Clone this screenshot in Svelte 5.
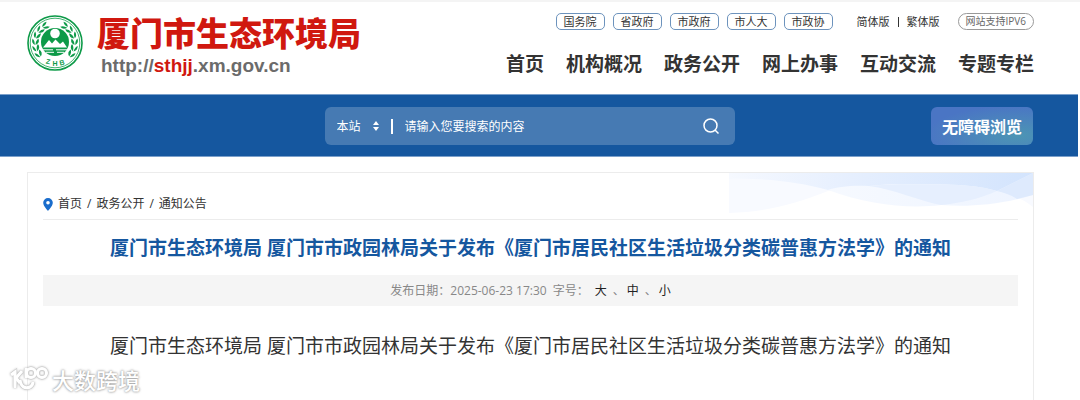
<script>
  const govLinks = ['国务院', '省政府', '市政府', '市人大', '市政协'];
  const navItems = ['首页', '机构概况', '政务公开', '网上办事', '互动交流', '专题专栏'];
  const crumbs = ['首页', '政务公开', '通知公告'];
  const title = '厦门市生态环境局 厦门市市政园林局关于发布《厦门市居民社区生活垃圾分类碳普惠方法学》的通知';

  // leaves of the laurel, as angles from the bottom of the emblem
  const leaves = [52, 71, 90, 109, 128, 147];

  let scope = $state('本站');
  let keyword = $state('');
</script>

<svelte:head>
  <title>厦门市生态环境局</title>
</svelte:head>

<div class="page">
  <header class="header">
    <a class="brand" href="#home">
      <svg class="emblem" viewBox="0 0 56 56" aria-hidden="true">
        <circle cx="28" cy="28" r="27" fill="#fff" stroke="#0d9a48" stroke-width="1.6" />
        <circle cx="28" cy="28" r="24.8" fill="none" stroke="#0d9a48" stroke-width="0.8" />
        {#each [1, -1] as side}
          <g transform="translate(28 28) scale({side} 1)" fill="#0d9a48">
            {#each leaves as angle}
              <g transform="rotate({-angle}) translate(0 19.5)">
                <path d="M-2 0Q0 -4.500 4.500 -3Q2.500 0 -2 0Z" />
                <path d="M-2 0.800Q0 4.300 4.500 3Q2.500 0.500 -2 0.800Z" />
              </g>
            {/each}
          </g>
        {/each}
        <circle cx="28" cy="27" r="15" fill="#fff" />
        <circle cx="28" cy="27" r="14" fill="#0d9a48" />
        <circle cx="28" cy="18.5" r="4.8" fill="#fff" />
        <path d="M16 32.500L22 25L25 28.500L28.500 24.500L33 29L36 26.500L40 32.500Z" fill="#fff" />
        <path d="M16 34.800H26M29 34.800H40M19 37.300H27M30 37.300H37" stroke="#fff" stroke-width="1" />
        <g class="emblem-text">
          <text transform="translate(18.5 48.5) rotate(12)">Z</text>
          <text x="25.5" y="51">H</text>
          <text transform="translate(33 50.5) rotate(-12)">B</text>
        </g>
      </svg>
      <span class="brand-words">
        <span class="brand-name">厦门市生态环境局</span>
        <span class="brand-url">http://<b>sthjj</b>.xm.gov.cn</span>
      </span>
    </a>

    <div class="header-right">
      <div class="top-links">
        {#each govLinks as link}
          <a class="pill" href="#gov">{link}</a>
        {/each}
        <span class="lang">
          <a href="#simplified">简体版</a>
          <i class="bar"></i>
          <a href="#traditional">繁体版</a>
        </span>
        <span class="ipv6">网站支持IPV6</span>
      </div>
      <nav class="nav">
        {#each navItems as item}
          <a href="#nav">{item}</a>
        {/each}
      </nav>
    </div>
  </header>

  <div class="banner">
    <form class="search" onsubmit={(e) => e.preventDefault()}>
      <select bind:value={scope} aria-label="搜索范围">
        <option>本站</option>
      </select>
      <svg class="arrows" viewBox="0 0 6 10" aria-hidden="true">
        <path d="M0 4L3 0L6 4ZM0 6L3 10L6 6Z" fill="#fff" />
      </svg>
      <input type="text" bind:value={keyword} placeholder="请输入您要搜索的内容" aria-label="搜索内容" />
      <button class="search-btn" aria-label="搜索">
        <svg viewBox="0 0 16 16" fill="none" stroke="#fff" stroke-width="1.5">
          <circle cx="7.5" cy="7.5" r="6.5" />
          <path d="M12 12L15.500 15.500" />
        </svg>
      </button>
    </form>
    <button class="access">无障碍浏览</button>
  </div>

  <main class="card">
    <svg class="waves" viewBox="0 0 304 40" preserveAspectRatio="none" aria-hidden="true">
      <defs>
        <linearGradient id="wave">
          <stop offset="0" stop-color="#f6f9ff" />
          <stop offset="0.4" stop-color="#e6effe" />
          <stop offset="1" stop-color="#d3e4fd" />
        </linearGradient>
        <linearGradient id="foam">
          <stop offset="0" stop-color="#fafcff" />
          <stop offset="1" stop-color="#eef4ff" />
        </linearGradient>
      </defs>
      <path d="M0 0H304V34C285 19 260 14 230 12C170 9 130 11 99 18C66 31 38 39 0 40Z" fill="#f8faff" />
      <path d="M0 0H304V22C270 32 240 34 212 32C180 36 140 32 99 17C70 9 40 6 0 6Z" fill="url(#foam)" />
      <path d="M0 0H304L268 18C258 15 246 13 230 12C190 10 150 11 140 13C122 12 108 14 99 17C70 9 40 5 0 6Z" fill="url(#wave)" />
      <path d="M140 13C160 11 195 11 230 12C246 13 258 15 268 18C250 26 232 30 212 32C190 28 165 16 140 13Z" fill="#e6effe" />
      <path d="M304 0V22L288 26C282 22 276 20 268 18Z" fill="#deeafd" />
    </svg>

    <nav class="crumbs" aria-label="当前位置">
      <svg class="pin" viewBox="0 0 10 13" aria-hidden="true">
        <path d="M5 0A4.800 4.800 0 0 0 0.200 4.800C0.200 8 5 13 5 13S9.800 8 9.800 4.800A4.800 4.800 0 0 0 5 0Z" fill="#1a6dcc" />
        <circle cx="5" cy="4.8" r="1.8" fill="#fff" />
      </svg>
      {#each crumbs as crumb, i}
        {#if i > 0}<span>/</span>{/if}
        <a href="#crumb">{crumb}</a>
      {/each}
    </nav>

    <h1>{title}</h1>

    <div class="meta">
      <span>发布日期：2025-06-23 17:30</span>
      <span>字号：</span>
      <button>大</button><span class="sep">、</span><button>中</button><span class="sep">、</span><button>小</button>
    </div>

    <p class="doc-title">{title}</p>
  </main>

  <div class="watermark">
    <svg viewBox="0 0 40 28" fill="none" aria-hidden="true">
      {#each ['rim', 'core'] as layer}
        <g class={layer}>
          <path d="M2 9L6 6V22" />
          <path d="M13 5L7 12L11 17" />
          <path d="M11 14C12 21 16 23 21 21Q24 19 24 16" />
          <path d="M17 2V12" />
          <circle cx="22" cy="7" r="4.5" />
          <circle cx="33" cy="7" r="4.5" />
        </g>
      {/each}
    </svg>
    <span>大数跨境</span>
  </div>
</div>

<style>
  :global(body) {
    margin: 0;
    background: #fff;
  }

  .page {
    position: relative;
    display: flex;
    flex-direction: column;
    box-sizing: border-box;
    min-height: 100vh;
    border-top: 2px solid #f4f4f4;
    font-family: "Open Sans", "Noto Sans CJK SC", sans-serif;
    font-size: 12px;
    color: #333;
  }

  a {
    color: inherit;
    text-decoration: none;
  }

  button,
  input,
  select {
    padding: 0;
    border: 0;
    background: none;
    color: inherit;
    font: inherit;
  }

  button {
    cursor: pointer;
  }

  .header {
    display: flex;
    justify-content: space-between;
    padding: 11px 46px 0 27px;
    height: 81px;
  }

  .brand {
    display: flex;
    gap: 14px;
  }

  .emblem {
    width: 56px;
    height: 56px;
    margin-top: 2px;
  }

  .emblem-text {
    font: bold 7px "Liberation Sans", sans-serif;
    fill: #0d9a48;
  }

  .brand-words {
    display: flex;
    flex-direction: column;
    white-space: nowrap;
  }

  .brand-name {
    color: #d0180f;
    font-size: 33px;
    font-weight: 900;
    line-height: 42px;
  }

  .brand-url {
    padding-left: 4px;
    color: #6b6b6b;
    font: bold 19px/22px "Liberation Sans", sans-serif;
  }

  .brand-url b {
    color: #d0180f;
  }

  .header-right {
    display: flex;
    flex-direction: column;
    align-items: flex-end;
    gap: 20px;
    white-space: nowrap;
  }

  .top-links {
    display: flex;
    align-items: center;
    gap: 8px;
    font-size: 11px;
    line-height: 15px;
  }

  .pill {
    padding: 0 7px;
    border: 1px solid #6d93bd;
    border-radius: 5px;
  }

  .lang {
    display: flex;
    align-items: center;
    gap: 8px;
    padding: 0 10px 0 16px;
  }

  .bar {
    width: 1px;
    height: 10px;
    background: #333;
  }

  .ipv6 {
    padding: 0 7px;
    border: 1px solid #999;
    border-radius: 9px;
    color: #666;
    font-size: 10px;
  }

  .nav {
    display: flex;
    gap: 22px;
    font-size: 19px;
    font-weight: bold;
    line-height: 28px;
  }

  .banner {
    display: grid;
    grid-template-columns: 1fr 410px 1fr;
    align-items: center;
    margin-right: 2px;
    padding: 12px 45px 11px 26px;
    border-top: 1px solid #7ba0cb;
    border-bottom: 1px solid #7ba0cb;
    background: #15579f;
    color: #fff;
  }

  .search {
    grid-column: 2;
    display: flex;
    align-items: center;
    box-sizing: border-box;
    height: 38px;
    padding: 0 16px 0 12px;
    border-radius: 6px;
    background: #467ab3;
  }

  select {
    width: 36px;
    appearance: none;
  }

  .arrows {
    width: 6px;
    height: 10px;
  }

  input {
    flex: 1;
    min-width: 0;
    height: 15px;
    margin-left: 12px;
    padding-left: 12px;
    border-left: 2px solid #fff;
    line-height: 15px;
  }

  input::placeholder {
    color: #fff;
    opacity: 1;
  }

  .search-btn,
  .search-btn svg {
    display: block;
    width: 16px;
    height: 16px;
  }

  .access {
    justify-self: end;
    width: 102px;
    height: 38px;
    border-radius: 6px;
    background: radial-gradient(ellipse at 85% 75%, #4c95b4, #4a75c4 75%);
    font-size: 16px;
    font-weight: bold;
  }

  .card {
    position: relative;
    flex: 1;
    margin: 15px 46px 0 27px;
    padding: 0 15px;
    border: 1px solid #ececec;
    border-bottom: 0;
  }

  .waves {
    position: absolute;
    top: 0;
    right: 0;
    width: 304px;
    height: 40px;
  }

  .crumbs {
    position: relative;
    display: flex;
    align-items: center;
    gap: 5px;
    padding: 20px 0 4px;
    border-bottom: 1px solid #ececec;
    line-height: 22px;
  }

  .pin {
    width: 10px;
    height: 13px;
  }

  h1,
  .doc-title {
    margin: 0;
    font-size: 19px;
    line-height: 28px;
    text-align: center;
  }

  h1 {
    padding: 14px 0 13px;
    color: #15579f;
  }

  .meta {
    display: flex;
    justify-content: center;
    align-items: center;
    gap: 6px;
    margin-bottom: 26px;
    background: #f5f5f5;
    color: #888;
    line-height: 31px;
  }

  .meta button {
    color: #222;
  }

  .sep {
    width: 8px;
  }

  .watermark {
    position: absolute;
    bottom: 5px;
    left: 9px;
    display: flex;
    align-items: center;
    gap: 3px;
    color: #fff;
    font-size: 22px;
    font-weight: 500;
    line-height: 30px;
    text-shadow: 0 0 2px #999, 0 0 3px #aaa;
  }

  .watermark svg {
    width: 40px;
    height: 28px;
    filter: drop-shadow(0 0 1px #bbb);
  }

  .rim {
    stroke: #c8c8c8;
    stroke-width: 4;
  }

  .core {
    stroke: #fff;
    stroke-width: 3;
  }
</style>
